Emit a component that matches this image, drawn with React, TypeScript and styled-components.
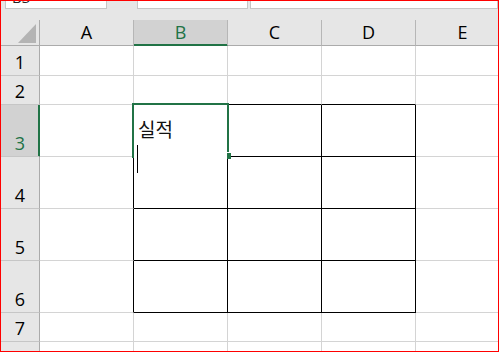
import React from 'react';
import styled, { createGlobalStyle, css } from 'styled-components';

const GREEN = '#217346';
const GRID = '#d4d4d4';
const HEAD_BG = '#e6e6e6';
const HEAD_SEL = '#d2d2d2';

const GlobalStyle = createGlobalStyle`
  html, body { margin: 0; padding: 0; background: #fff; }
  body { font-family: "Open Sans", "Noto Sans CJK KR", sans-serif; }
  #root { width: 500px; height: 353px; }
`;

const Frame = styled.div`
  width: 499px;
  height: 352px;
  box-sizing: border-box;
  border: 1px solid #ff0000;
  overflow: hidden;
  background: #fff;
  display: flex;
  flex-direction: column;
`;

const TopBar = styled.div`
  flex: none;
  height: 19px;
  background: ${HEAD_BG};
  display: flex;
  align-items: flex-start;
  padding-left: 4px;
`;

const BarBox = styled.div<{ $w?: number; $mr?: number }>`
  height: 8px;
  box-sizing: border-box;
  background: #fff;
  border: 1px solid #c6c6c6;
  border-top: none;
  overflow: hidden;
  ${(p) => (p.$w ? css`width: ${p.$w}px; flex: none;` : css`flex: 1;`)}
  margin-right: ${(p) => p.$mr ?? 0}px;
`;

const NameText = styled.div`
  font-size: 15px;
  line-height: 20px;
  margin-top: -14px;
  padding-left: 6px;
  color: #222;
`;

const Sheet = styled.div`
  flex: none;
  display: grid;
  grid-template-columns: 39px repeat(4, 94px) 94px;
  grid-template-rows: 26px 30px 29px repeat(4, 52px) 29px 29px;
`;

const Corner = styled.div`
  box-sizing: border-box;
  background: ${HEAD_BG};
  border-right: 1px solid #ababab;
  border-bottom: 1px solid #ababab;
  display: flex;
  justify-content: flex-end;
  align-items: flex-end;
  padding: 0 3px 2px 0;
`;

const ColHead = styled.div<{ $sel?: boolean }>`
  box-sizing: border-box;
  background: ${(p) => (p.$sel ? HEAD_SEL : HEAD_BG)};
  color: ${(p) => (p.$sel ? GREEN : '#000')};
  border-right: 1px solid #b6b6b6;
  border-bottom: 1px solid ${(p) => (p.$sel ? GREEN : '#ababab')};
  box-shadow: ${(p) => (p.$sel ? `inset 0 -1px 0 ${GREEN}` : 'none')};
  display: flex;
  align-items: center;
  justify-content: center;
  font-size: 18px;
  line-height: 25px;
`;

const RowHead = styled.div<{ $sel?: boolean }>`
  box-sizing: border-box;
  background: ${(p) => (p.$sel ? HEAD_SEL : HEAD_BG)};
  color: ${(p) => (p.$sel ? GREEN : '#000')};
  border-right: 1px solid ${(p) => (p.$sel ? GREEN : '#ababab')};
  box-shadow: ${(p) => (p.$sel ? `inset -1px 0 0 ${GREEN}` : 'none')};
  border-bottom: 1px solid #c6c6c6;
  display: flex;
  align-items: flex-end;
  justify-content: center;
  font-size: 18px;
  line-height: 24px;
  padding-bottom: 1px;
`;

const Cell = styled.div<{ $r: string; $b: string }>`
  box-sizing: border-box;
  position: relative;
  background: #fff;
  border-right: 1px solid ${(p) => p.$r};
  border-bottom: 1px solid ${(p) => p.$b};
`;

const Editor = styled.div`
  position: absolute;
  left: -2px;
  top: -2px;
  width: 97px;
  height: 55px;
  box-sizing: border-box;
  border: 2px solid ${GREEN};
  border-bottom: none;
  background: #fff;
  z-index: 2;
  padding: 10px 0 0 3px;
  display: flex;
  flex-direction: column;
  align-items: flex-start;
`;

const EditorText = styled.div`
  font-family: "Noto Sans CJK KR", "Noto Sans", sans-serif;
  font-size: 19px;
  line-height: 28px;
  color: #111;
  padding-left: 1px;
  white-space: nowrap;
`;

const Caret = styled.div`
  width: 1px;
  height: 28px;
  background: #000;
  margin-top: 2px;
  flex: none;
`;

const FillHandle = styled.div`
  position: absolute;
  left: 92px;
  top: 47px;
  width: 4px;
  height: 6px;
  background: ${GREEN};
  border-top: 1px solid #fff;
  border-left: 1px solid #fff;
`;

const COLS = ['A', 'B', 'C', 'D', 'E'];
const ROWS = [1, 2, 3, 4, 5, 6, 7, 8];

export default function App() {
  const cells: React.ReactNode[] = [];
  cells.push(
    <Corner key="corner">
      <svg width="18" height="19" viewBox="0 0 18 19">
        <polygon points="0,19 18,19 18,0" fill="#b4b4b4" />
      </svg>
    </Corner>
  );
  COLS.forEach((c) => {
    cells.push(
      <ColHead key={`h${c}`} $sel={c === 'B'}>
        {c}
      </ColHead>
    );
  });
  ROWS.forEach((r) => {
    cells.push(
      <RowHead key={`r${r}`} $sel={r === 3}>
        {r}
      </RowHead>
    );
    COLS.forEach((c, ci) => {
      const right = r >= 3 && r <= 6 && ci <= 3 ? '#000' : GRID;
      const bottom = r >= 2 && r <= 6 && ci >= 1 && ci <= 3 ? '#000' : GRID;
      const isActive = r === 3 && c === 'B';
      cells.push(
        <Cell key={`${c}${r}`} $r={right} $b={bottom}>
          {isActive && (
            <Editor>
              <EditorText>실적</EditorText>
              <Caret />
              <FillHandle />
            </Editor>
          )}
        </Cell>
      );
    });
  });

  return (
    <>
      <GlobalStyle />
      <Frame>
        <TopBar>
          <BarBox $w={102} $mr={30}>
            <NameText>B3</NameText>
          </BarBox>
          <BarBox $w={111} $mr={2} />
          <BarBox />
        </TopBar>
        <Sheet>{cells}</Sheet>
      </Frame>
    </>
  );
}
